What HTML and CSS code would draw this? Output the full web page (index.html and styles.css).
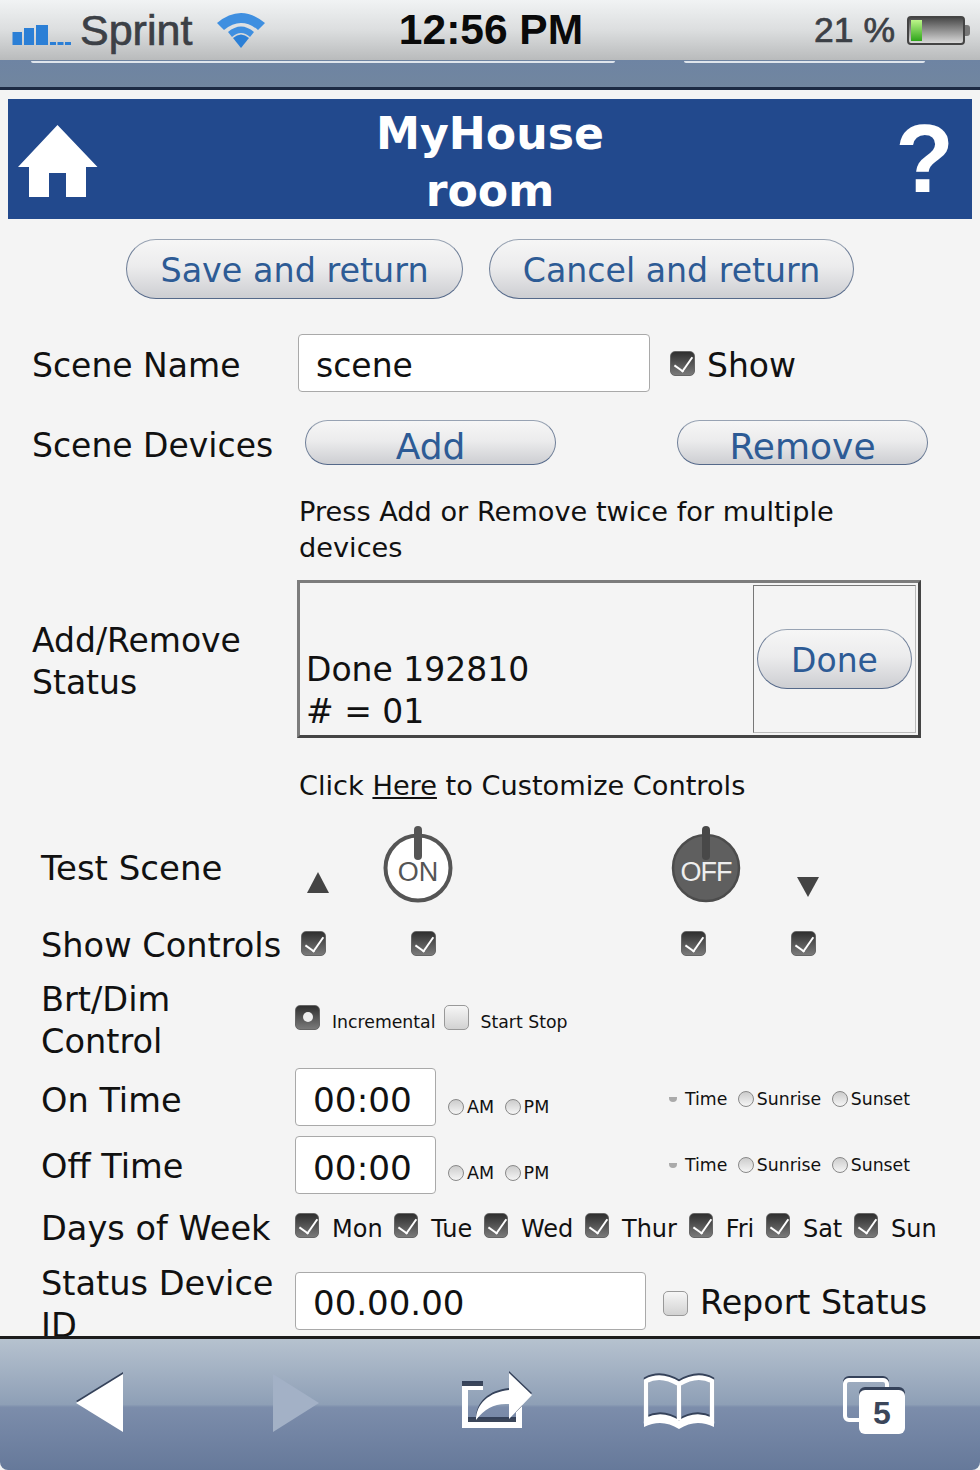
FILE: index.html
```html
<!DOCTYPE html>
<html lang="en">
<head>
    <meta charset="UTF-8">
    <title>MyHouse room</title>
    <link rel="stylesheet" href="styles.css">
</head>
<body>
    <div class="status-bar">
        <div class="status-left">
            <svg class="signal" width="60" height="22" viewBox="0 0 60 22">
                <rect x="0.5" y="8" width="9.5" height="13" fill="#2b7fd6"/>
                <rect x="12" y="4" width="10" height="17" fill="#2b7fd6"/>
                <rect x="24" y="1" width="12" height="20" fill="#2b7fd6"/>
                <rect x="38" y="18" width="6" height="3" fill="#2b7fd6"/>
                <rect x="45.5" y="18" width="6" height="3" fill="#2b7fd6"/>
                <rect x="53" y="18" width="6" height="3" fill="#2b7fd6"/>
            </svg>
            <span class="carrier">Sprint</span>
            <svg class="wifi" width="50" height="38" viewBox="0 0 50 38">
                <path d="M25 37 L17 27 Q25 20 33 27 Z" fill="#2b7fd6"/>
                <path d="M12 21 Q25 10 38 21 L34 26 Q25 18 16 26 Z" fill="#3f8fe0"/>
                <path d="M1 12 Q25 -8 49 12 L42 19 Q25 5 8 19 Z" fill="#3f8fe0"/>
            </svg>
        </div>
        <div class="clock">12:56 PM</div>
        <div class="status-right">
            <span class="percent">21 %</span>
            <div class="battery"><div class="battery-level"></div></div>
        </div>
    </div>
    <div class="top-strip">
        <div class="strip-line first"></div>
        <div class="strip-line second"></div>
    </div>

    <main class="page">
        <header class="banner">
            <svg class="home-icon" width="80" height="74" viewBox="0 0 80 74">
                <path d="M39.5 1 L79.5 43 H68 V73 H48 V49 H31 V73 H11 V43 H0 Z" fill="#fff"/>
            </svg>
            <div class="banner-title">MyHouse<br>room</div>
            <div class="help">?</div>
        </header>

        <div class="top-buttons">
            <button class="pill save">Save and return</button>
            <button class="pill cancel">Cancel and return</button>
        </div>

        <div class="row row-name">
            <label class="label">Scene Name</label>
            <div class="text-box name-box">scene</div>
            <span class="check on"></span>
            <span class="show">Show</span>
        </div>

        <div class="row row-devices">
            <label class="label">Scene Devices</label>
            <button class="pill small add">Add</button>
            <button class="pill small">Remove</button>
        </div>

        <p class="hint">Press Add or Remove twice for multiple devices</p>

        <div class="row row-status">
            <label class="label">Add/Remove<br>Status</label>
            <div class="status-table">
                <div class="status-text">Done 192810<br># = 01</div>
                <div class="status-cell"><button class="pill done">Done</button></div>
            </div>
        </div>

        <p class="customize">Click <u>Here</u> to Customize Controls</p>

        <div class="controls">
            <div class="row row-test">
                <label class="label">Test Scene</label>
                <div class="arrow-up"></div>
                <svg class="power on-icon" width="72" height="80" viewBox="0 0 72 80">
                    <circle cx="36" cy="44" r="32.5" fill="#fff" stroke="#555" stroke-width="4"/>
                    <rect x="32" y="2" width="8" height="34" rx="4" fill="#555"/>
                    <text x="36" y="57" text-anchor="middle" class="power-text" fill="#555">ON</text>
                </svg>
                <svg class="power off-icon" width="72" height="80" viewBox="0 0 72 80">
                    <circle cx="36" cy="44" r="33" fill="#5f5f5f" stroke="#4c4c4c" stroke-width="2.5"/>
                    <rect x="32" y="2" width="8" height="34" rx="4" fill="#484848"/>
                    <text x="36" y="57" text-anchor="middle" class="power-text off-text" fill="#eee">OFF</text>
                </svg>
                <div class="arrow-down"></div>
            </div>

            <div class="row row-show">
                <label class="label">Show Controls</label>
                <span class="check on"></span>
                <span class="check on"></span>
                <span class="check on"></span>
                <span class="check on"></span>
            </div>

            <div class="row row-brt">
                <label class="label">Brt/Dim<br>Control</label>
                <span class="check dot"></span>
                <span class="tiny">Incremental</span>
                <span class="check off"></span>
                <span class="tiny">Start Stop</span>
            </div>

            <div class="row row-time">
                <label class="label">On Time</label>
                <div class="text-box time-box">00:00</div>
                <div class="ampm"><span class="radio"></span>AM<span class="radio"></span>PM</div>
                <div class="kinds"><span class="radio-mini"></span>Time<span class="radio"></span>Sunrise<span class="radio"></span>Sunset</div>
            </div>

            <div class="row row-time row-off">
                <label class="label">Off Time</label>
                <div class="text-box time-box">00:00</div>
                <div class="ampm"><span class="radio"></span>AM<span class="radio"></span>PM</div>
                <div class="kinds"><span class="radio-mini"></span>Time<span class="radio"></span>Sunrise<span class="radio"></span>Sunset</div>
            </div>

            <div class="row row-days">
                <label class="label">Days of Week</label>
                <div class="days">
                    <span class="check on"></span><span>Mon</span>
                    <span class="check on"></span><span>Tue</span>
                    <span class="check on"></span><span>Wed</span>
                    <span class="check on"></span><span>Thur</span>
                    <span class="check on"></span><span>Fri</span>
                    <span class="check on"></span><span>Sat</span>
                    <span class="check on"></span><span>Sun</span>
                </div>
            </div>

            <div class="row row-device">
                <label class="label">Status Device ID</label>
                <div class="text-box device-box">00.00.00</div>
                <span class="check off"></span>
                <span class="report">Report Status</span>
            </div>
        </div>
    </main>

    <footer class="toolbar">
        <svg class="tool back" width="50" height="60" viewBox="0 0 50 60"><path d="M48 1 L48 59 L1 30 Z" fill="#fff"/></svg>
        <svg class="tool forward" width="50" height="60" viewBox="0 0 50 60"><path d="M2 1 L2 59 L48 30 Z" fill="#a3b1c6"/></svg>
        <svg class="tool share" width="74" height="64" viewBox="0 0 74 64">
            <path d="M3 14 H24 V20 H9 V52 H57 V42 L63 36 V58 H3 Z" fill="#fff"/>
            <path d="M3 13 H24 V16 H3 Z M9 49 H57 V52 H9 Z" fill="#3b465a"/>
            <path d="M17 50 C17 34 30 22 50 20 V3 L73 25 L50 49 V34 C36 33 26 38 17 50 Z" fill="#fff"/>
        </svg>
        <svg class="tool book" width="76" height="56" viewBox="0 0 76 56">
            <path d="M38 10 Q20 -1 5 7 V46 Q22 38 38 49 Q54 38 71 46 V7 Q56 -1 38 10 V46" fill="none" stroke="#fff" stroke-width="4.5"/>
            <path d="M3 47 Q21 38 38 50 Q55 38 73 47 V53 Q55 44 38 55 Q21 44 3 53 Z" fill="#fff"/>
        </svg>
        <div class="tabs-icon">
            <div class="tab-back"></div>
            <div class="tab-front">5</div>
        </div>
    </footer>
</body>
</html>
```
FILE: styles.css
```css
* {
    box-sizing: border-box;
}

body {
    font-family: 'DejaVu Sans', sans-serif;
    background: #f4f4f4;
    margin: 0;
    width: 980px;
    height: 1470px;
    overflow: hidden;
    display: flex;
    flex-direction: column;
    color: #111;
}

/* phone status bar */
.status-bar {
    height: 60px;
    flex: none;
    background: linear-gradient(#f1f3f4 0%, #dcdedf 50%, #b9bbbc 100%);
    display: grid;
    grid-template-columns: 1fr auto 1fr;
    align-items: center;
    padding: 0 10px 0 12px;
    font-family: 'Liberation Sans', sans-serif;
}

.status-left {
    display: flex;
    align-items: center;
}

.signal {
    margin-top: 10px;
}

.carrier {
    font-size: 43px;
    color: #3c4046;
    margin-left: 8px;
    -webkit-text-stroke: 0.7px #3c4046;
}

.wifi {
    margin-left: 24px;
}

.clock {
    font-size: 42.5px;
    font-weight: 700;
    color: #0a0a0a;
}

.status-right {
    display: flex;
    justify-content: flex-end;
    align-items: center;
    gap: 12px;
    padding-right: 5px;
}

.percent {
    font-size: 35.5px;
    color: #3c4046;
    -webkit-text-stroke: 0.7px #3c4046;
}

.battery {
    position: relative;
    width: 58px;
    height: 29px;
    border: 2px solid #444;
    border-radius: 4px;
    background: linear-gradient(#4a4a4a, #d8d8d8);
    padding: 2px;
}

.battery::after {
    content: "";
    position: absolute;
    right: -7px;
    top: 7px;
    width: 5px;
    height: 11px;
    background: #777;
    border-radius: 0 3px 3px 0;
}

.battery-level {
    width: 11px;
    height: 100%;
    background: linear-gradient(#bdf58a, #2fa51a);
}

.top-strip {
    height: 30px;
    flex: none;
    background: linear-gradient(#6e84a3, #71869f);
    border-bottom: 3px solid #1d2b44;
    display: flex;
    align-items: flex-start;
    padding: 1px 55px 0 31px;
    gap: 69px;
}

.strip-line {
    height: 2px;
    background: #dfe5ec;
    border-radius: 0 0 4px 4px;
}

.strip-line.first {
    width: 584px;
}

.strip-line.second {
    width: 241px;
}

/* page content */
.page {
    flex: 1;
    min-height: 0;
    overflow: hidden;
    padding: 9px 8px 0 8px;
}

.banner {
    height: 120px;
    background: #22498d;
    color: #fff;
    display: grid;
    grid-template-columns: 1fr auto 1fr;
    align-items: center;
    padding: 0 18px;
}

.home-icon {
    margin: 4px 0 0 -8px;
}

.banner-title {
    font-size: 44.2px;
    font-weight: 700;
    line-height: 57px;
    text-align: center;
    margin-top: 5px;
}

.help {
    justify-self: end;
    font-family: 'Liberation Sans', sans-serif;
    font-size: 96px;
    font-weight: 700;
    line-height: 1;
}

.pill {
    font-family: 'DejaVu Sans', sans-serif;
    color: #2d5b95;
    background: linear-gradient(#f6f6f6 0%, #ececed 45%, #cdced2 100%);
    border: 1.5px solid;
    border-color: #98a3b3 #6f7f98 #55698a #6f7f98;
    border-radius: 30px;
    padding: 2px 0 0;
}

.top-buttons {
    display: flex;
    gap: 26px;
    margin: 20px 0 0 118px;
}

.save {
    width: 337px;
    height: 60px;
    font-size: 33.4px;
}

.cancel {
    width: 365px;
    height: 60px;
    font-size: 33.2px;
}

.row {
    display: flex;
    align-items: center;
}

.label {
    font-size: 33px;
    line-height: 42px;
    color: #111;
    flex: none;
}

.row-name {
    margin: 35px 0 0 24px;
    height: 58px;
}

.row-name .label {
    width: 266px;
    padding-top: 5px;
}

.text-box {
    background: #fff;
    border: 1.5px solid #a9a9a9;
    border-radius: 4px;
    font-size: 33px;
    display: flex;
    align-items: center;
    flex: none;
}

.name-box {
    width: 352px;
    height: 58px;
    padding: 4px 0 0 17px;
}

.show {
    font-size: 33px;
    margin: 4px 0 0 12px;
}

.row-name .check {
    margin-left: 20px;
}

.check {
    flex: none;
    display: inline-block;
    width: 25px;
    height: 25px;
    border-radius: 5px;
    border: 1px solid #666;
    position: relative;
}

.check.on,
.check.dot {
    background: linear-gradient(#2f2f2f, #7a7a7a);
}

.check.on::after {
    content: "";
    position: absolute;
    left: 7px;
    top: 1px;
    width: 9px;
    height: 16px;
    border: solid #fff;
    border-width: 0 2.5px 2.5px 0;
    transform: rotate(35deg);
}

.check.dot::after {
    content: "";
    position: absolute;
    left: 7px;
    top: 6px;
    width: 10px;
    height: 10px;
    border-radius: 50%;
    background: #eee;
}

.check.off {
    background: linear-gradient(#f6f6f6, #d2d2d2);
    border-color: #999;
}

.row-devices {
    margin: 28px 0 0 24px;
    height: 45px;
}

.row-devices .label {
    width: 273px;
    padding-top: 6px;
}

.small {
    flex: none;
    width: 251px;
    height: 45px;
    font-size: 36px;
    line-height: 42px;
    padding-top: 5px;
}

.add {
    margin-right: 121px;
}

.hint {
    margin: 29px 60px 0 291px;
    font-size: 27.2px;
    line-height: 35.5px;
}

.row-status {
    margin: 15px 0 0 24px;
}

.row-status .label {
    width: 265px;
    margin-top: 6px;
}

.status-table {
    width: 624px;
    height: 158px;
    border: 3px solid;
    border-color: #7c7c7c #444 #444 #7c7c7c;
    display: flex;
    padding: 2px;
}

.status-text {
    flex: 1;
    font-size: 33px;
    line-height: 42px;
    padding: 64px 0 0 4px;
}

.status-cell {
    width: 163px;
    border: 1.5px solid;
    border-color: #777 #bbb #bbb #777;
    display: flex;
    align-items: center;
    justify-content: center;
}

.done {
    width: 155px;
    height: 60px;
    font-size: 33px;
}

.customize {
    margin: 30px 0 0 291px;
    font-size: 27.2px;
    line-height: 35px;
}

.controls {
    margin: 20px 0 0 33px;
    position: relative;
}

.controls .label {
    font-size: 33.6px;
}

.controls .row-test .label {
    font-size: 34px;
}

.power-text {
    font-family: 'Liberation Sans', sans-serif;
    font-size: 27px;
}

.off-text {
    letter-spacing: -1px;
}

.power {
    flex: none;
    margin-bottom: 8px;
}

.row-test {
    height: 90px;
}

.row-test .label {
    width: 264px;
}

.arrow-up {
    width: 0;
    height: 0;
    border-left: 11px solid transparent;
    border-right: 11px solid transparent;
    border-bottom: 21px solid #444;
    margin: 29px 0 0 2px;
}

.on-icon {
    margin-left: 53px;
}

.off-icon {
    margin-left: 216px;
}

.arrow-down {
    width: 0;
    height: 0;
    border-left: 11px solid transparent;
    border-right: 11px solid transparent;
    border-top: 20px solid #444;
    margin: 37px 0 0 55px;
}

.row-show {
    height: 46px;
    margin-top: 10px;
}

.row-show .label {
    width: 260px;
}

.row-show .check {
    margin-bottom: 6px;
}

.row-show .check:nth-of-type(2) {
    margin-left: 85px;
}

.row-show .check:nth-of-type(3) {
    margin-left: 245px;
}

.row-show .check:nth-of-type(4) {
    margin-left: 85px;
}

.row-brt {
    height: 84px;
    margin: 10px 0 8px;
}

.row-brt .label {
    width: 254px;
}

.row-brt .check {
    margin-bottom: 8px;
}

.tiny {
    font-size: 17.3px;
    margin: 2px 8px 0 12px;
}

.row-time {
    height: 60px;
    margin-bottom: 6px;
}

.row-time .label {
    width: 254px;
}

.time-box {
    width: 141px;
    height: 58px;
    font-size: 34.3px;
    padding: 5px 0 0 17px;
    margin-bottom: 8px;
}

.row-off .time-box {
    margin-bottom: 4px;
}

.ampm {
    font-size: 17.5px;
    display: flex;
    align-items: center;
    margin: 12px 0 0 12px;
    width: 220px;
}

.radio {
    flex: none;
    width: 16px;
    height: 16px;
    border-radius: 50%;
    border: 1px solid #888;
    background: linear-gradient(#ccc, #f5f5f5);
    margin-right: 3px;
}

.ampm .radio:nth-of-type(2),
.kinds .radio:nth-of-type(2),
.kinds .radio:nth-of-type(3) {
    margin-left: 10.5px;
}

.kinds {
    font-size: 17.3px;
    display: flex;
    align-items: center;
    margin: -4px 0 0 1px;
}

.radio-mini {
    width: 8px;
    height: 5px;
    border-radius: 0 0 5px 5px;
    background: #aaa;
    margin-right: 8px;
}

.row-days {
    height: 52px;
}

.row-days .label {
    width: 254px;
}

.days {
    display: flex;
    align-items: center;
    font-size: 24px;
}

.days .check {
    width: 24px;
    margin: 0 13px 8px 0;
}

.days span:not(.check) {
    margin-right: 11.7px;
}

.row-device {
    height: 84px;
    margin-top: 8px;
}

.row-device .label {
    width: 254px;
}

.device-box {
    width: 351px;
    height: 58px;
    font-size: 34px;
    padding: 3px 0 0 17px;
    margin-bottom: 8px;
}

.row-device .check {
    margin: 0 0 4px 17px;
}

.report {
    font-size: 33.3px;
    margin: 0 0 6px 12px;
}

/* browser toolbar */
.toolbar {
    height: 134px;
    flex: none;
    border-top: 3px solid #1c1c1c;
    background: linear-gradient(#b6c2cf 0%, #8e9fb6 50%, #7c8dab 52%, #66799a 100%);
    display: flex;
    align-items: center;
    padding: 0 0 6px 75px;
    border-radius: 0 0 8px 8px;
}

.tool {
    flex: none;
}

.back,
.forward {
    margin-top: 3px;
}

.back,
.share,
.book {
    filter: drop-shadow(0 -2px 0 #35425a);
}

.forward {
    margin-left: 146px;
}

.share {
    margin-left: 138px;
}

.book {
    margin-left: 108px;
}

.tabs-icon {
    position: relative;
    width: 62px;
    height: 60px;
    margin: 12px 0 0 126px;
}

.tab-back {
    position: absolute;
    left: 0;
    top: 0;
    width: 46px;
    height: 44px;
    border: 4px solid #fff;
    border-radius: 6px;
    box-shadow: 0 -2px 0 #35425a;
}

.tab-front {
    position: absolute;
    left: 16px;
    top: 12px;
    width: 46px;
    height: 44px;
    background: #fff;
    border-radius: 6px;
    color: #3b465a;
    font-family: 'Liberation Sans', sans-serif;
    font-weight: 700;
    font-size: 32px;
    text-align: center;
    line-height: 46px;
    box-shadow: 0 -3px 0 #35425a;
}
```
